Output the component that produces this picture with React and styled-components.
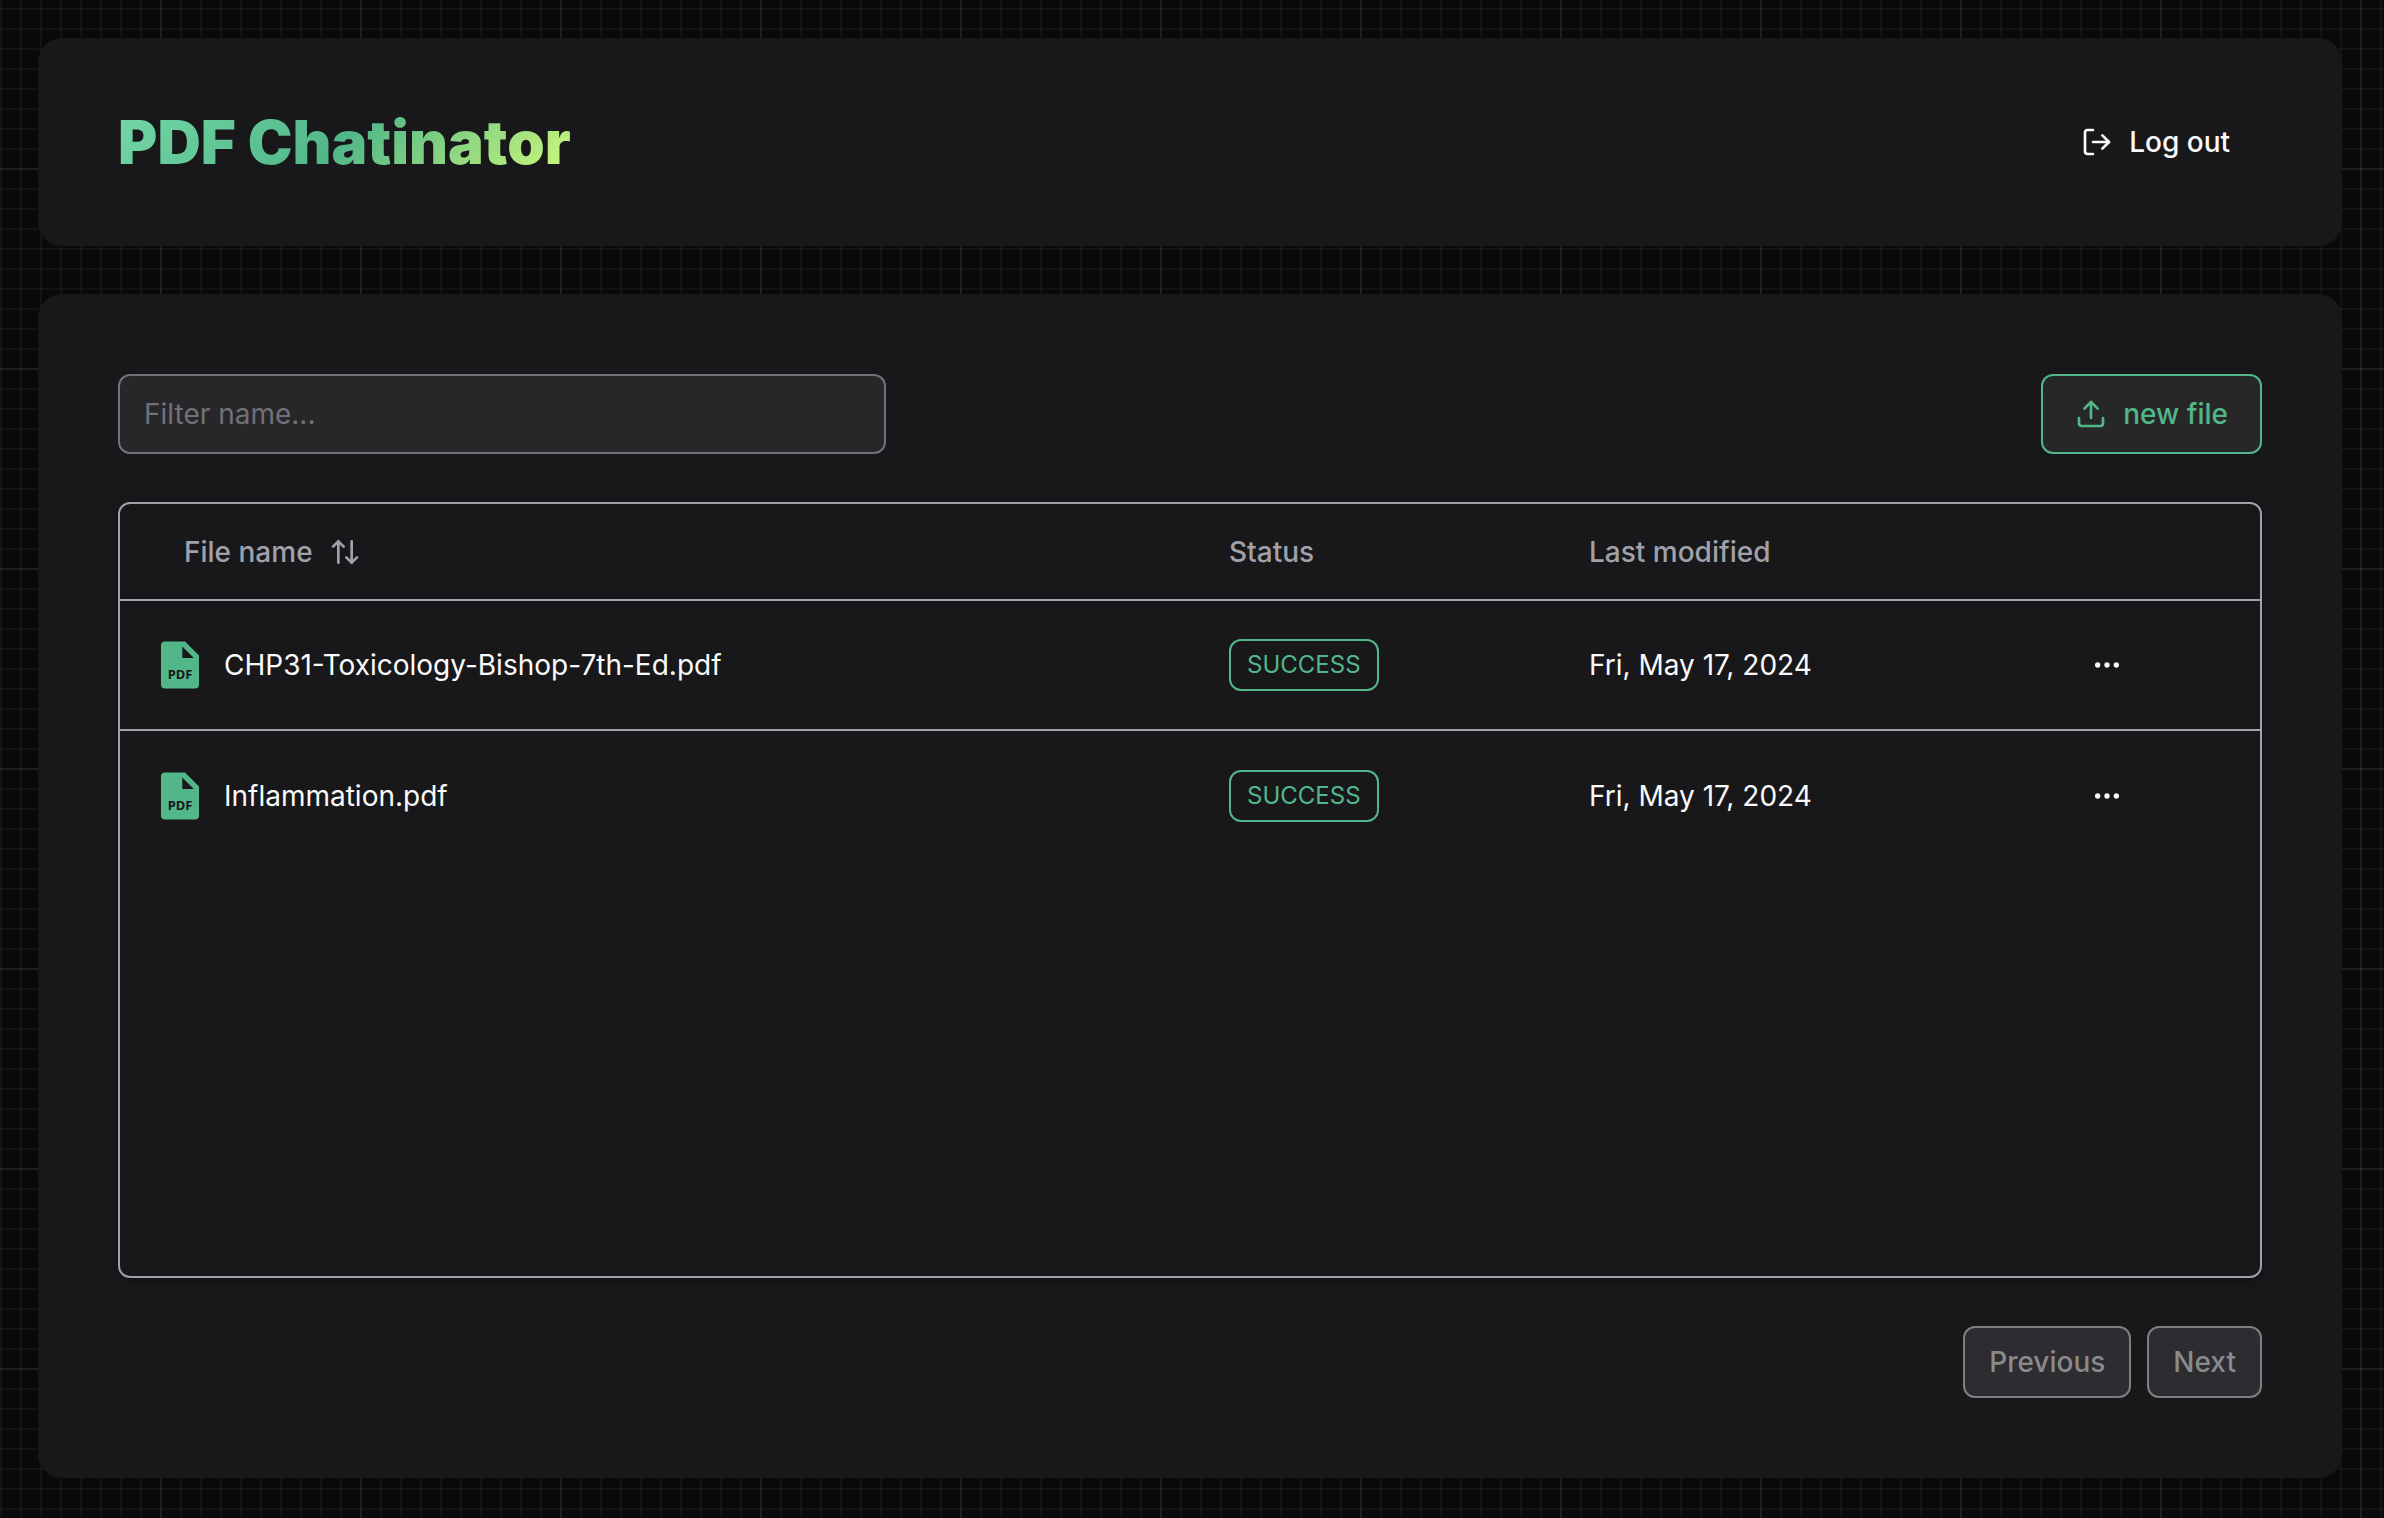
import React, { useState } from "react";
import styled, { createGlobalStyle } from "styled-components";
import { ArrowUpDown, Ellipsis, LogOut, Upload } from "lucide-react";

const color = {
  page: "#09090b",
  panel: "#18181b",
  raised: "#27272a",
  muted: "#71717a",
  line: "#a1a1aa",
  text: "#fafafa",
  green: "#52b788",
  gridMinor: "rgba(255, 255, 255, 0.04)",
  gridMajor: "rgba(255, 255, 255, 0.05)",
};

const GlobalStyle = createGlobalStyle`
  *, *::before, *::after { box-sizing: border-box; }
  html { background: ${color.page}; }
  body {
    margin: 0;
    color: ${color.text};
    font-family: Inter, "Liberation Sans", sans-serif;
    font-size: 28px;
    line-height: 40px;
  }
  button, input { font: inherit; }
  svg { flex: none; }
`;

const Page = styled.div`
  min-height: 100vh;
  display: flex;
  flex-direction: column;
  gap: 48px;
  padding: 38px 42px 40px 38px;
  background-color: ${color.page};
  background-image:
    linear-gradient(${color.gridMajor} 2px, transparent 2px),
    linear-gradient(90deg, ${color.gridMajor} 2px, transparent 2px),
    linear-gradient(${color.gridMinor} 2px, transparent 2px),
    linear-gradient(90deg, ${color.gridMinor} 2px, transparent 2px);
  background-size: 200px 200px, 200px 200px, 20px 20px, 20px 20px;
  background-position: 0 168px, 160px 0, 0 8px, 0 0;
`;

const Header = styled.header`
  display: flex;
  align-items: center;
  justify-content: space-between;
  padding: 64px 80px;
  background: ${color.panel};
  border-radius: 24px;
`;

const Title = styled.h1`
  margin: 0;
  font-size: 60px;
  font-weight: 900;
  line-height: 80px;
  color: transparent;
  background-image: linear-gradient(135deg, #74d8a8, #52b788 50%, #d4fc79);
  background-clip: text;
`;

const Button = styled.button`
  display: inline-flex;
  align-items: center;
  justify-content: center;
  gap: 16px;
  height: ${(p) => p.$height}px;
  padding: 0 ${(p) => p.$pad}px;
  border: 2px solid ${(p) => p.$border || "transparent"};
  border-radius: 12px;
  background: ${(p) => p.$background || "transparent"};
  color: ${(p) => p.$color || color.text};
  font-weight: 500;
  cursor: pointer;

  &:disabled { cursor: default; }
`;

const Main = styled.main`
  flex: 1;
  display: flex;
  flex-direction: column;
  gap: 48px;
  padding: 80px;
  background: ${color.panel};
  border-radius: 24px;
`;

const Toolbar = styled.div`
  display: flex;
  align-items: center;
  justify-content: space-between;
`;

const FilterInput = styled.input`
  width: 768px;
  height: 80px;
  padding: 0 24px;
  border: 2px solid ${color.muted};
  border-radius: 12px;
  background: ${color.raised};
  color: ${color.text};

  &::placeholder { color: ${color.muted}; opacity: 1; }
`;

const TableFrame = styled.div`
  height: 776px;
  border: 2px solid ${color.line};
  border-radius: 12px;
  overflow: hidden;
  box-shadow: 0 2px 8px rgba(0, 0, 0, 0.3);
`;

const Table = styled.table`
  width: 100%;
  border-collapse: collapse;
  table-layout: fixed;
`;

const Col = styled.col`
  width: ${(p) => p.$width || "auto"};
`;

const Row = styled.tr`
  border-bottom: ${(p) => (p.$last ? "0" : `2px solid ${color.line}`)};
`;

const HeadCell = styled.th`
  height: 96px;
  padding: 0 32px;
  color: ${color.line};
  font-weight: 500;
  text-align: left;
`;

const Cell = styled.td`
  height: 130px;
  padding: 0 32px;
`;

const SortButton = styled.button`
  display: inline-flex;
  align-items: center;
  gap: 16px;
  padding: 0 32px;
  border: 0;
  background: none;
  color: inherit;
  cursor: pointer;
`;

const FileName = styled.div`
  display: flex;
  align-items: center;
  gap: 24px;
  padding-left: 8px;
`;

const Badge = styled.span`
  display: inline-flex;
  align-items: center;
  height: 52px;
  padding: 0 16px;
  border: 2px solid ${color.green};
  border-radius: 12px;
  color: ${color.green};
  font-size: 24px;
  line-height: 32px;
  vertical-align: middle;
`;

const IconButton = styled.button`
  display: inline-flex;
  align-items: center;
  justify-content: center;
  width: 76px;
  height: 64px;
  padding: 0;
  border: 0;
  border-radius: 12px;
  background: none;
  color: inherit;
  vertical-align: middle;
  cursor: pointer;
`;

const Pager = styled.nav`
  display: flex;
  justify-content: flex-end;
  gap: 16px;
`;

const PdfLabel = styled.text`
  font-family: "Noto Sans", "Liberation Sans", sans-serif;
  font-size: 13px;
  font-weight: 700;
  fill: ${color.panel};
`;

function PdfIcon() {
  return (
    <svg width="40" height="48" viewBox="0 0 40 48" role="img" aria-label="PDF file">
      <path
        fill={color.green}
        fillRule="evenodd"
        d="M5 0.5H25L39 14.5V43.5Q39 47.5 35 47.5H5Q1 47.5 1 43.5V4.5Q1 0.5 5 0.5ZM22.3 5.5V17H33.8Z"
      />
      <PdfLabel x="20" y="38" textAnchor="middle">PDF</PdfLabel>
    </svg>
  );
}

const files = [
  { name: "CHP31-Toxicology-Bishop-7th-Ed.pdf", status: "SUCCESS", modified: "Fri, May 17, 2024" },
  { name: "Inflammation.pdf", status: "SUCCESS", modified: "Fri, May 17, 2024" },
];

export default function App() {
  const [filter, setFilter] = useState("");
  const [descending, setDescending] = useState(false);
  const visible = files.filter((f) => f.name.toLowerCase().includes(filter.toLowerCase()));
  if (descending) visible.reverse();

  return (
    <>
      <GlobalStyle />
      <Page>
        <Header>
          <Title>PDF Chatinator</Title>
          <Button type="button" $height={72} $pad={30}>
            <LogOut size={32} aria-hidden="true" />
            Log out
          </Button>
        </Header>
        <Main>
          <Toolbar>
            <FilterInput
              type="text"
              aria-label="Filter name"
              placeholder="Filter name..."
              value={filter}
              onChange={(e) => setFilter(e.target.value)}
            />
            <Button type="button" $height={80} $pad={32} $border={color.green} $background={color.raised} $color={color.green}>
              <Upload size={32} aria-hidden="true" />
              new file
            </Button>
          </Toolbar>
          <TableFrame>
            <Table>
              <colgroup>
                <Col />
                <Col $width="360px" />
                <Col $width="480px" />
                <Col $width="223px" />
              </colgroup>
              <thead>
                <Row>
                  <HeadCell scope="col">
                    <SortButton type="button" onClick={() => setDescending(!descending)}>
                      File name
                      <ArrowUpDown size={32} aria-hidden="true" />
                    </SortButton>
                  </HeadCell>
                  <HeadCell scope="col">Status</HeadCell>
                  <HeadCell scope="col">Last modified</HeadCell>
                  <HeadCell as="td" />
                </Row>
              </thead>
              <tbody>
                {visible.map((file, i) => (
                  <Row key={file.name} $last={i === visible.length - 1}>
                    <Cell>
                      <FileName>
                        <PdfIcon />
                        {file.name}
                      </FileName>
                    </Cell>
                    <Cell><Badge>{file.status}</Badge></Cell>
                    <Cell>{file.modified}</Cell>
                    <Cell>
                      <IconButton type="button" aria-label={`Actions for ${file.name}`}>
                        <Ellipsis size={32} aria-hidden="true" />
                      </IconButton>
                    </Cell>
                  </Row>
                ))}
              </tbody>
            </Table>
          </TableFrame>
          <Pager aria-label="Pages">
            <Button type="button" disabled $height={72} $pad={24} $border="#7f7f81" $background="#2d2c31" $color="#8a8a8b">Previous</Button>
            <Button type="button" disabled $height={72} $pad={24} $border="#7f7f81" $background="#2d2c31" $color="#8a8a8b">Next</Button>
          </Pager>
        </Main>
      </Page>
    </>
  );
}
